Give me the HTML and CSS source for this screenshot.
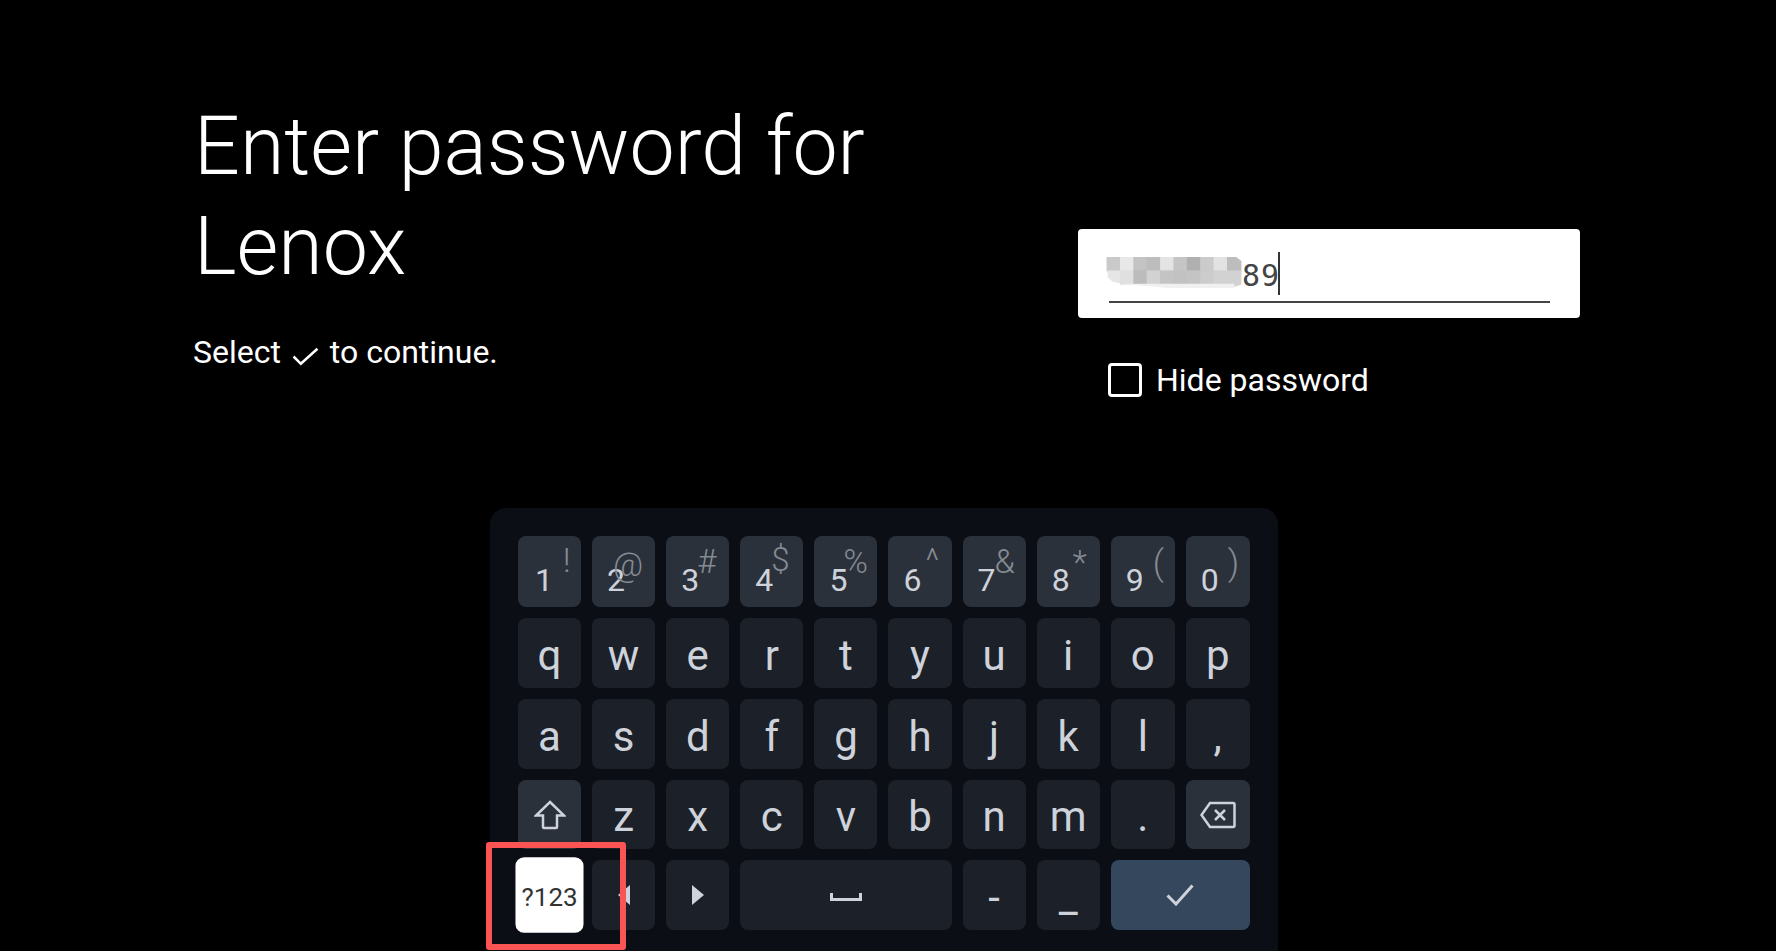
FILE: index.html
```html
<!DOCTYPE html>
<html lang="en">
<head>
    <meta charset="UTF-8">
    <meta name="viewport" content="width=device-width, initial-scale=1.0">
    <title>Enter password</title>
    <link rel="stylesheet" href="styles.css">
</head>
<body>
    <div class="page">
        <div class="top">
            <div class="intro">
                <h1 class="title">Enter password for<br>Lenox</h1>
                <p class="subtitle">Select
                    <svg class="subtitle-check" width="27" height="19" viewBox="0 0 26 18"><path d="M1.5 9 L8.5 16 L24.5 1.5" /></svg>
                    to continue.</p>
            </div>
            <div class="form">
                <div class="field">
                    <div class="field-value">
                        <svg class="mosaic" width="137" height="35" viewBox="0 0 132 34">
                            <rect x="0" y="0" width="14" height="14" fill="#c9c9c9" />
                            <rect x="13" y="0" width="14" height="14" fill="#e8e8e8" />
                            <rect x="26" y="0" width="14" height="14" fill="#c3c3c3" />
                            <rect x="39" y="0" width="14" height="14" fill="#bdbdbd" />
                            <rect x="52" y="0" width="14" height="14" fill="#e4e4e4" />
                            <rect x="65" y="0" width="14" height="14" fill="#c5c5c5" />
                            <rect x="78" y="0" width="14" height="14" fill="#b0b0b0" />
                            <rect x="91" y="0" width="14" height="14" fill="#cbcbcb" />
                            <rect x="104" y="0" width="14" height="14" fill="#e2e2e2" />
                            <path d="M117 0 H126 L131 4 V14 H117 Z" fill="#bdbdbd" />
                            <path d="M1 13 H14 V26 L6 24 L1 20 Z" fill="#e6e6e6" />
                            <rect x="13" y="13" width="14" height="14" fill="#e0e0e0" />
                            <rect x="26" y="13" width="14" height="14" fill="#bcbcbc" />
                            <rect x="39" y="13" width="14" height="14" fill="#d2d2d2" />
                            <rect x="52" y="13" width="14" height="14" fill="#c4c4c4" />
                            <rect x="65" y="13" width="14" height="14" fill="#c2c2c2" />
                            <rect x="78" y="13" width="14" height="14" fill="#c4c4c4" />
                            <rect x="91" y="13" width="14" height="14" fill="#cccccc" />
                            <rect x="104" y="13" width="14" height="14" fill="#d2d2d2" />
                            <path d="M117 13 H131 V27 L124 29 H117 Z" fill="#d2d2d2" />
                            <path d="M14 26 H124 V30 H60 Z" fill="#f0f0f0" />
                        </svg>
                        <span class="field-text">89</span>
                        <span class="caret"></span>
                    </div>
                </div>
                <div class="hide-row">
                    <span class="checkbox"></span>
                    <span class="hide-label">Hide password</span>
                </div>
            </div>
        </div>

        <div class="keyboard">
            <div class="key key-mid"><span class="digit digit-one">1</span><span class="sym sym-bang">!</span></div>
            <div class="key key-mid"><span class="digit">2</span><span class="sym sym-at">@</span></div>
            <div class="key key-mid"><span class="digit">3</span><span class="sym sym-hash">#</span></div>
            <div class="key key-mid"><span class="digit">4</span><span class="sym sym-dollar">$</span></div>
            <div class="key key-mid"><span class="digit">5</span><span class="sym sym-pct">%</span></div>
            <div class="key key-mid"><span class="digit">6</span><span class="sym sym-caret">^</span></div>
            <div class="key key-mid"><span class="digit">7</span><span class="sym sym-amp">&amp;</span></div>
            <div class="key key-mid"><span class="digit">8</span><span class="sym sym-star">*</span></div>
            <div class="key key-mid"><span class="digit">9</span><span class="sym sym-paren">(</span></div>
            <div class="key key-mid"><span class="digit">0</span><span class="sym sym-paren">)</span></div>

            <div class="key">q</div>
            <div class="key">w</div>
            <div class="key">e</div>
            <div class="key">r</div>
            <div class="key">t</div>
            <div class="key">y</div>
            <div class="key">u</div>
            <div class="key">i</div>
            <div class="key">o</div>
            <div class="key">p</div>

            <div class="key">a</div>
            <div class="key">s</div>
            <div class="key">d</div>
            <div class="key">f</div>
            <div class="key">g</div>
            <div class="key">h</div>
            <div class="key">j</div>
            <div class="key">k</div>
            <div class="key">l</div>
            <div class="key">,</div>

            <div class="key key-mid key-icon">
                <svg class="thin" width="32" height="30" viewBox="0 0 32 30"><path d="M16 2 L30 15.5 H23 V27 Q23 28 22 28 H10 Q9 28 9 27 V15.5 H2 Z" /></svg>
            </div>
            <div class="key">z</div>
            <div class="key">x</div>
            <div class="key">c</div>
            <div class="key">v</div>
            <div class="key">b</div>
            <div class="key">n</div>
            <div class="key">m</div>
            <div class="key">.</div>
            <div class="key key-mid key-icon">
                <svg class="thin" width="36" height="28" viewBox="0 0 36 28"><path d="M10 2 H33 A1.5 1.5 0 0 1 34.5 3.5 V24.5 A1.5 1.5 0 0 1 33 26 H10 L1.5 14 Z" /><path d="M15 9 L25 19 M25 9 L15 19" /></svg>
            </div>

            <div class="key key-focus">?123</div>
            <div class="key key-icon">
                <svg class="arrow" width="12" height="20" viewBox="0 0 12 20"><path d="M12 0 V20 L0 10 Z" /></svg>
            </div>
            <div class="key key-icon">
                <svg class="arrow" width="12" height="20" viewBox="0 0 12 20"><path d="M0 0 V20 L12 10 Z" /></svg>
            </div>
            <div class="key key-icon key-space">
                <svg width="32" height="10" viewBox="0 0 32 10"><path d="M1.5 1 V7.5 H30.5 V1" /></svg>
            </div>
            <div class="key">-</div>
            <div class="key">_</div>
            <div class="key key-enter key-icon">
                <svg width="28" height="22" viewBox="0 0 28 22"><path d="M1.5 11.5 L10 20 L26.5 1.5" /></svg>
            </div>
        </div>

        <div class="callout"></div>
    </div>
</body>
</html>
```

FILE: styles.css
```css
body {
    margin: 0;
    background-color: #000;
    color: #fff;
    font-family: Roboto, 'Noto Sans', sans-serif;
}

.page {
    position: relative;
    height: 951px;
    overflow: hidden;
}

.top {
    display: flex;
    height: 508px;
}

.intro {
    width: 885px;
    padding: 97px 0 0 193px;
}

.title {
    margin: 0 0 0 1px;
    font-size: 80.7px;
    font-weight: 300;
    line-height: 100px;
    white-space: nowrap;
}

.subtitle {
    margin: 35px 0 0;
    font-size: 32px;
    line-height: 40px;
    white-space: nowrap;
}

.subtitle-check {
    margin: 0 3px -3px;
}

.subtitle-check path {
    fill: none;
    stroke: #fff;
    stroke-width: 2.4;
}

.form {
    width: 502px;
    padding-top: 229px;
}

.field {
    box-sizing: border-box;
    height: 89px;
    padding: 23px 30px 0 31px;
    background-color: #fff;
    border-radius: 4px;
}

.field-value {
    display: flex;
    align-items: flex-end;
    height: 49px;
    border-bottom: 2px solid #444;
    color: #444;
}

.mosaic {
    flex: none;
    margin: 0 0 9px -3px;
}

.field-text {
    font-family: 'DejaVu Sans Mono', monospace;
    font-size: 30px;
    letter-spacing: 1px;
    line-height: 34px;
    margin: 0 -2px 8px -1px;
}

.caret {
    width: 2px;
    height: 43px;
    margin-bottom: 6px;
    background-color: #333;
}

.hide-row {
    display: flex;
    align-items: center;
    gap: 14px;
    margin: 44px 0 0 30px;
}

.checkbox {
    box-sizing: border-box;
    width: 34px;
    height: 34px;
    border: 3px solid #fff;
    border-radius: 4px;
}

.hide-label {
    padding-top: 2px;
    font-size: 32px;
    line-height: 33px;
}

.keyboard {
    display: grid;
    grid-template-columns: repeat(8, 63.1px) repeat(2, 64px);
    grid-template-rows: 71px 70px 70px 69px 70px;
    gap: 11px;
    box-sizing: border-box;
    width: 788px;
    height: 443px;
    margin-left: 490px;
    padding: 28px;
    background-color: #0b0e15;
    border-radius: 16px 16px 0 0;
}

.key {
    position: relative;
    display: flex;
    align-items: center;
    justify-content: center;
    padding-top: 5px;
    box-sizing: border-box;
    background-color: #1c2028;
    border-radius: 8px;
    color: #ced2da;
    font-size: 42px;
    line-height: 1;
}

.key-mid {
    background-color: #2b313b;
}

.key-icon {
    padding-top: 0;
}

.key-icon svg path {
    fill: none;
    stroke: #ced2da;
    stroke-width: 3;
}

.key-icon svg.thin path {
    stroke-width: 2.5;
}

.key-icon .arrow path {
    fill: #ced2da;
    stroke: none;
}

.key-space {
    grid-column: span 3;
    padding-top: 3px;
}

.key-enter {
    grid-column: span 2;
    background-color: #34475d;
}

.key-focus {
    padding-top: 3px;
    background-color: #fff;
    color: #333;
    font-size: 24px;
    transform: scale(1.08);
}

.digit {
    position: absolute;
    left: 15px;
    bottom: 11px;
    font-size: 32px;
    line-height: 1;
}

.digit-one {
    left: 17px;
}

.sym {
    position: absolute;
    top: 10px;
    color: #858b93;
    font-size: 33px;
    font-weight: 300;
    line-height: 1;
}

.sym-bang { left: 45px; top: 8px; }
.sym-at { left: 21px; top: 12px; }
.sym-hash { left: 31px; top: 9px; }
.sym-dollar { left: 31px; top: 7px; }
.sym-pct { left: 29px; top: 9px; }
.sym-caret { left: 37px; top: 8px; }
.sym-amp { left: 32px; top: 9px; }
.sym-star { left: 36px; top: 10px; }
.sym-paren { left: 42px; top: 10px; font-size: 35px; }

.callout {
    position: absolute;
    left: 486px;
    top: 842px;
    box-sizing: border-box;
    width: 140px;
    height: 108px;
    border: 6px solid #fb5454;
    border-radius: 3px;
}
```
